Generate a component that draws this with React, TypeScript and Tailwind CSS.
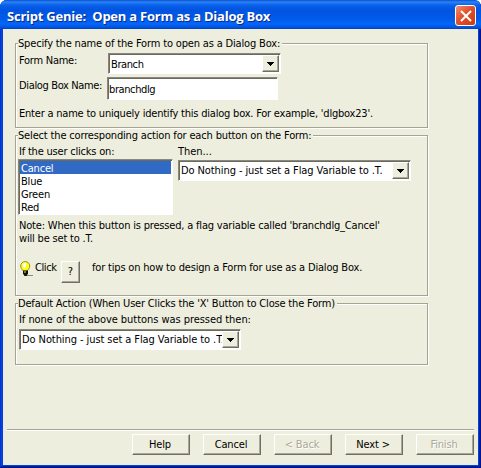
import type { ReactNode } from "react";

const etched = "border border-[#a5a394] shadow-[1px_1px_0_#fff,inset_1px_1px_0_#fff]";
const sunken =
  "bg-white border border-t-[#8a887a] border-l-[#8a887a] border-r-white border-b-white shadow-[inset_1px_1px_0_#6b6a60]";
const raised =
  "bg-[#edeedd] border border-t-white border-l-white border-r-[#716f64] border-b-[#716f64] shadow-[inset_-1px_-1px_0_#a9a797]";

function Group({ legend, tracking, className, children }: { legend: string; tracking: string; className: string; children: ReactNode }) {
  return (
    <section className={`${etched} ml-3 w-[413px] pl-[2px] ${className}`}>
      <h2 className={`-mt-[7px] w-fit bg-[#edeedd] pr-[2px] leading-[14px] ${tracking}`}>{legend}</h2>
      {children}
    </section>
  );
}

function Combo({ value, tracking, className }: { value: string; tracking: string; className: string }) {
  return (
    <div className={`${sunken} flex h-[21px] p-px ${className}`}>
      <span className={`min-w-0 flex-1 overflow-hidden pl-px leading-[18px] ${tracking}`}>{value}</span>
      <span className={`${raised} flex h-[17px] w-[17px] shrink-0 items-center justify-center`}>
        <svg width="7" height="4" viewBox="0 0 7 4" shapeRendering="crispEdges">
          <path d="M0 0h7v1H6v1H5v1H4v1H3V3H2V2H1V1H0z" />
        </svg>
      </span>
    </div>
  );
}

function Bulb() {
  return (
    <svg width="14" height="17" viewBox="0 0 14 17">
      <path d="M6 14.500h7" stroke="#8a8a80" fill="none" />
      <path d="M3.500 10C2 8.500 .7 7 .7 5a4.500 4.500 0 0 1 9 0c0 2-1.200 3.500-2.700 5z" fill="#ffff19" stroke="#8f9220" />
      <path d="M3 3.500 4 2h2v3L5 7 3 6z" fill="#fff" />
      <path d="M3 9.500h5v3L6.500 15h-2L3 12.500z" fill="#111" />
      <path d="M4 11h2" stroke="#e9e930" />
    </svg>
  );
}

const buttons = [
  { label: "Help" },
  { label: "Cancel" },
  { label: "< Back", disabled: true },
  { label: "Next >" },
  { label: "Finish", disabled: true },
];
const items = ["Cancel", "Blue", "Green", "Red"];

export default function App() {
  return (
    <div className="flex h-[468px] w-[481px] flex-col overflow-hidden whitespace-nowrap rounded-t-[7px] bg-[#0144d8] font-['DejaVu_Sans_Condensed','DejaVu_Sans',sans-serif] text-[11px] text-black shadow-[inset_-1px_-1px_0_#00138c,inset_1px_0_0_#0831d9,inset_-2px_-2px_0_#001ea0]">
      <header className="flex h-[29px] shrink-0 items-center justify-between bg-[linear-gradient(#0a4fd0_0,#2b83f5_2px,#0a62ec_5px,#0154e0_10px,#0159e8_18px,#0366fb_24px,#0250d8_28px,#013ab5_29px)] pl-[7px] pr-[5px]">
        <h1 className="whitespace-pre pt-[3px] font-['Open_Sans',sans-serif] text-[13px] font-bold leading-[18px] tracking-[-0.230px] text-white [text-shadow:1px_1px_0_#0a2d85]">Script Genie:  Open a Form as a Dialog Box</h1>
        <button className="mt-[2px] flex h-[21px] w-[21px] items-center justify-center rounded-[3px] border border-white bg-[linear-gradient(135deg,#ee8f70,#e1512d_45%,#c93a12)]">
          <svg width="12" height="12" viewBox="0 0 12 12"><path d="M1 1l10 10M11 1L1 11" stroke="#fff" strokeWidth="2" /></svg>
        </button>
      </header>
      <main className="mx-[3px] flex h-[436px] flex-col bg-[#edeedd] pt-[14px]">
        <Group legend="Specify the name of the Form to open as a Dialog Box:" tracking="tracking-[-0.160px]" className="h-[85px]">
          <div className="mt-[2px] flex h-[24px] pl-px">
            <label className="w-[89px] pt-px leading-[14px] tracking-[-0.250px]">Form Name:</label>
            <Combo value="Branch" tracking="tracking-[-0.400px] pt-px" className="w-[173px]" />
          </div>
          <div className="flex h-[30px] pl-px">
            <label className="w-[88px] pt-[2px] leading-[14px] tracking-[-0.350px]">Dialog Box Name:</label>
            <div className={`${sunken} h-[23px] w-[171px] pl-px pt-px leading-[21px] tracking-[-0.400px]`}>branchdlg</div>
          </div>
          <p className="pl-px leading-[14px] tracking-[-0.210px]">Enter a name to uniquely identify this dialog box. For example, 'dlgbox23'.</p>
        </Group>
        <Group legend="Select the corresponding action for each button on the Form:" tracking="tracking-[-0.160px]" className="mt-[7px] h-[161px]">
          <div className="mt-[2px] flex h-[74px] gap-[5px]">
            <div>
              <p className="pl-px leading-[14px] tracking-[-0.200px]">If the user clicks on:</p>
              <ul className={`${sunken} h-[56px] w-[155px] p-px`}>
                {items.map((item, i) => (
                  <li key={item} className={`h-[13px] pl-px pt-px leading-[13px] tracking-[-0.200px] ${i === 0 ? "bg-[#316ac5] text-white" : ""}`}>{item}</li>
                ))}
              </ul>
            </div>
            <div>
              <p className="mb-px leading-[14px] tracking-[-0.050px]">Then...</p>
              <Combo value="Do Nothing - just set a Flag Variable to .T." tracking="tracking-[-0.090px]" className="w-[233px]" />
            </div>
          </div>
          <p className="pl-px leading-[13px] tracking-[-0.185px]">Note: When this button is pressed, a flag variable called 'branchdlg_Cancel'<br />will be set to .T.</p>
          <div className="mt-[16px] flex pl-[2px]">
            <Bulb />
            <span className="ml-px w-[26px] leading-[14px] tracking-[-0.400px]">Click</span>
            <button className={`${raised} h-[22px] w-[19px] leading-[18px]`}>?</button>
            <span className="ml-[12px] leading-[14px] tracking-[-0.180px]">for tips on how to design a Form for use as a Dialog Box.</span>
          </div>
        </Group>
        <Group legend="Default Action (When User Clicks the 'X' Button to Close the Form)" tracking="tracking-[-0.180px]" className="mt-[7px] h-[62px]">
          <p className="mb-[2px] mt-[2px] pl-px leading-[14px] tracking-[-0.050px]">If none of the above buttons was pressed then:</p>
          <Combo value="Do Nothing - just set a Flag Variable to .T." tracking="tracking-[-0.080px]" className="ml-px w-[222px]" />
        </Group>
        <hr className="mx-1 mt-auto h-[2px] border-0 border-t border-[#a5a394] bg-white" />
        <footer className="mb-[10px] mr-1 mt-[3px] flex justify-end gap-[13px]">
          {buttons.map((b) => (
            <button key={b.label} disabled={b.disabled} className={`${raised} h-[21px] w-[58px] pr-[2px] leading-[18px] tracking-[-0.150px] ${b.disabled ? "text-[#aca899] [text-shadow:1px_1px_0_#fff]" : ""}`}>{b.label}</button>
          ))}
        </footer>
      </main>
    </div>
  );
}
